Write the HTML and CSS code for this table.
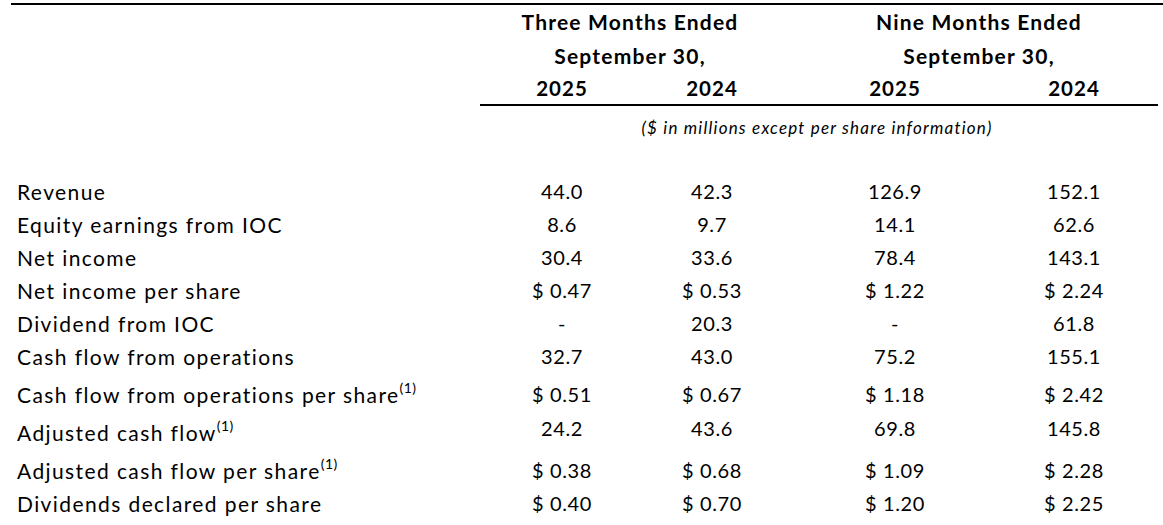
FILE: index.html
```html
<!DOCTYPE html>
<html lang="en">
<head>
<meta charset="utf-8">
<title>Financial Highlights</title>
<link rel="stylesheet" href="styles.css">
</head>
<body>
<div class="report">
  <div class="topline"></div>

  <div class="row head">
    <div></div>
    <div class="group">Three Months Ended</div>
    <div></div>
    <div class="group">Nine Months Ended</div>
  </div>
  <div class="row head">
    <div></div>
    <div class="group">September 30,</div>
    <div></div>
    <div class="group">September 30,</div>
  </div>
  <div class="row split">
    <div></div>
    <div class="years">
      <div>2025</div>
      <div>2024</div>
      <div></div>
      <div>2025</div>
      <div>2024</div>
    </div>
  </div>
  <div class="row split caption-row">
    <div></div>
    <div class="caption">($ in millions except per share information)</div>
  </div>

  <div class="body">
    <div class="row data"><div class="label">Revenue</div><div>44.0</div><div>42.3</div><div></div><div>126.9</div><div>152.1</div></div>
    <div class="row data"><div class="label">Equity earnings from IOC</div><div>8.6</div><div>9.7</div><div></div><div>14.1</div><div>62.6</div></div>
    <div class="row data"><div class="label">Net income</div><div>30.4</div><div>33.6</div><div></div><div>78.4</div><div>143.1</div></div>
    <div class="row data"><div class="label">Net income per share</div><div>$ 0.47</div><div>$ 0.53</div><div></div><div>$ 1.22</div><div>$ 2.24</div></div>
    <div class="row data"><div class="label">Dividend from IOC</div><div>-</div><div>20.3</div><div></div><div>-</div><div>61.8</div></div>
    <div class="row data"><div class="label">Cash flow from operations</div><div>32.7</div><div>43.0</div><div></div><div>75.2</div><div>155.1</div></div>
    <div class="row data tall"><div class="label">Cash flow from operations per share<sup>(1)</sup></div><div>$ 0.51</div><div>$ 0.67</div><div></div><div>$ 1.18</div><div>$ 2.42</div></div>
    <div class="row data tall raised"><div class="label">Adjusted cash flow<sup>(1)</sup></div><div>24.2</div><div>43.6</div><div></div><div>69.8</div><div>145.8</div></div>
    <div class="row data tall"><div class="label">Adjusted cash flow per share<sup>(1)</sup></div><div>$ 0.38</div><div>$ 0.68</div><div></div><div>$ 1.09</div><div>$ 2.28</div></div>
    <div class="row data"><div class="label">Dividends declared per share</div><div>$ 0.40</div><div>$ 0.70</div><div></div><div>$ 1.20</div><div>$ 2.25</div></div>
  </div>
</div>
</body>
</html>
```

FILE: styles.css
```css
html, body {
  margin: 0;
  padding: 0;
  background: #ffffff;
}

body {
  font-family: Lato, "Open Sans", "Liberation Sans", sans-serif;
  color: #000000;
  font-size: 20px;
}

.report {
  padding-left: 11px;
}

.topline {
  margin-top: 3px;
  height: 2px;
  background: #000000;
}

.row {
  display: grid;
}

.head {
  grid-template-columns: 469px 300px 20px 358px;
  height: 34px;
  line-height: 34px;
  font-weight: 700;
  font-size: 21px;
  letter-spacing: 1.2px;
}

.group {
  text-align: center;
  white-space: nowrap;
}

.split {
  grid-template-columns: 469px 678px;
}

.years {
  display: grid;
  grid-template-columns: 164px 136px 20px 190px 168px;
  height: 31px;
  line-height: 31px;
  font-weight: 700;
  font-size: 20.5px;
  letter-spacing: 1px;
  text-align: center;
  border-bottom: 2px solid #000000;
}

.caption-row {
  padding-top: 10px;
}

.caption {
  font-style: italic;
  font-size: 17px;
  letter-spacing: 1.2px;
  line-height: 24px;
  text-align: center;
  padding-right: 4px;
  white-space: nowrap;
}

.body {
  margin-top: 35px;
}

.data {
  grid-template-columns: 469px 164px 136px 20px 190px 168px;
  height: 33px;
  line-height: 33px;
  text-align: center;
  letter-spacing: 0.6px;
}

.data .label {
  text-align: left;
  padding-left: 6px;
  white-space: nowrap;
  font-size: 21px;
  letter-spacing: 1.4px;
}

.data.tall {
  height: 38px;
}

.data.tall > div {
  padding-top: 5px;
}

.data.raised > div:not(.label) {
  padding-top: 1px;
}

sup {
  font-size: 14px;
  letter-spacing: 0.5px;
  line-height: 0;
  vertical-align: 10px;
}
```
